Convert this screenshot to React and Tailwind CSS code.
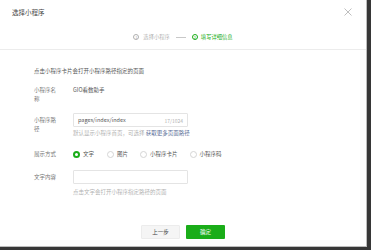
import React, { useState } from 'react';

const font = { fontFamily: '"Noto Sans CJK SC", "Noto Sans", sans-serif' };

const Radio = ({ checked, label, onClick }) => (
  <button type="button" onClick={onClick} className="flex items-center gap-[3px] text-[5.5px] leading-[9px] text-[#555]">
    {checked ? (
      <span className="w-[7px] h-[7px] rounded-full border-[2px] border-[#1aad19] bg-white" />
    ) : (
      <span className="w-[7px] h-[7px] rounded-full border border-[#d5d5d5] bg-white" />
    )}
    <span>{label}</span>
  </button>
);

const App = () => {
  const [mode, setMode] = useState('文字');
  const modes = ['文字', '图片', '小程序卡片', '小程序码'];

  return (
    <div className="w-[371px] h-[250px] bg-[#373737] overflow-hidden" style={font}>
      <div className="w-[367px] h-[247px] bg-white border-r border-b border-[#bdbdbd] flex flex-col">
        {/* header */}
        <div className="flex items-center justify-between pl-[12px] pr-[14px] pt-[7px] h-[17px]">
          <span className="text-[6.5px] leading-[10px] text-[#444]">选择小程序</span>
          <svg width="8" height="8" viewBox="0 0 8 8" className="text-[#a3a3a3]">
            <path d="M0.5 0.5 L7.5 7.5 M7.5 0.5 L0.5 7.5" stroke="currentColor" strokeWidth="0.7" />
          </svg>
        </div>

        {/* steps */}
        <div className="flex items-center justify-center mt-[15px] h-[10px] text-[5.3px] leading-[9px]">
          <span className="w-[6px] h-[6px] rounded-full border-[0.6px] border-[#b0b0b0] text-[#b0b0b0] text-[4px] leading-[5px] flex items-center justify-center">1</span>
          <span className="ml-[4px] text-[#b2b2b2]">选择小程序</span>
          <span className="mx-[6px] w-[10px] h-[0.6px] bg-[#c8c8c8]" />
          <span className="w-[6px] h-[6px] rounded-full border-[0.6px] border-[#1aad19] text-[#1aad19] text-[4px] leading-[5px] flex items-center justify-center">2</span>
          <span className="ml-[3px] text-[#1aad19]">填写详细信息</span>
        </div>

        <div className="mt-[7px] h-px bg-[#ececec]" />

        {/* body */}
        <div className="pl-[34px] text-[5.5px] leading-[9px]">
          <p className="mt-[17px] text-[#555]">点击小程序卡片会打开小程序路径指定的页面</p>

          <div className="flex mt-[10px]">
            <div className="w-[23px] text-[#777]">小程序名称</div>
            <div className="ml-[16px] text-[#555]">GIO看数助手</div>
          </div>

          <div className="flex mt-[9px]">
            <div className="w-[23px] pt-[2.5px] text-[#777]">小程序路径</div>
            <div className="ml-[16px]">
              <div className="w-[115px] h-[14px] border border-[#e4e4e4] rounded-[1px] flex items-center justify-between px-[4px]">
                <span className="text-[#555]">pages/index/index</span>
                <span className="text-[#b2b2b2] text-[5px]">17/1024</span>
              </div>
              <p className="mt-[2px] text-[#b2b2b2]">
                默认显示小程序首页，可选择 <span className="text-[#576b95]">获取更多页面路径</span>
              </p>
            </div>
          </div>

          <div className="flex items-center mt-[12px]">
            <div className="w-[23px] text-[#777]">展示方式</div>
            <div className="ml-[16px] flex items-center">
              {modes.map((m, i) => (
                <div key={m} className={i === 0 ? '' : i === 1 ? 'ml-[13px]' : 'ml-[12px]'}>
                  <Radio checked={mode === m} label={m} onClick={() => setMode(m)} />
                </div>
              ))}
            </div>
          </div>

          <div className="flex mt-[11px]">
            <div className="w-[23px] pt-[2.5px] text-[#777]">文字内容</div>
            <div className="ml-[16px]">
              <div className="w-[115px] h-[14px] border border-[#e4e4e4] rounded-[1px]" />
              <p className="mt-[4px] text-[#b2b2b2]">点击文字会打开小程序指定路径的页面</p>
            </div>
          </div>
        </div>

        {/* footer */}
        <div className="flex justify-center gap-[6px] mt-[28px]">
          <button type="button" className="w-[39px] h-[14px] rounded-[1px] bg-[#f5f5f5] border border-[#ececec] text-[5.5px] text-[#444]">上一步</button>
          <button type="button" className="w-[39px] h-[14px] rounded-[1px] bg-[#1aad19] text-[5.5px] text-white">确定</button>
        </div>
      </div>
    </div>
  );
};

export default App;
